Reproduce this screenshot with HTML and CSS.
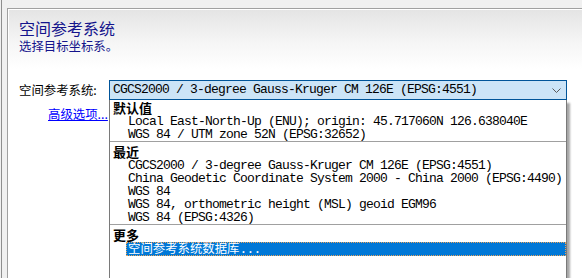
FILE: index.html
```html
<!DOCTYPE html>
<html lang="zh-CN">
<head>
    <meta charset="UTF-8">
    <title>空间参考系统</title>
    <link rel="stylesheet" href="styles.css">
</head>
<body>
    <div class="frame">
        <div class="panel">
            <h1 class="title">空间参考系统</h1>
            <p class="subtitle">选择目标坐标系。</p>

            <div class="field">
                <label class="field-label">空间参考系统:</label>
                <div class="combo">
                    <div class="combo-box">
                        <span class="combo-text">CGCS2000 / 3-degree Gauss-Kruger CM 126E (EPSG:4551)</span>
                        <svg class="chevron" width="9" height="5" viewBox="0 0 9 5">
                            <polyline points="0.5,0.5 4.5,4.5 8.5,0.5" fill="none" stroke="#5a5a5a" stroke-width="1"/>
                        </svg>
                    </div>

                    <div class="dropdown">
                        <div class="group">
                            <div class="group-title">默认值</div>
                            <div class="item">Local East-North-Up (ENU); origin: 45.717060N 126.638040E</div>
                            <div class="item">WGS 84 / UTM zone 52N (EPSG:32652)</div>
                        </div>
                        <div class="group">
                            <div class="group-title">最近</div>
                            <div class="item">CGCS2000 / 3-degree Gauss-Kruger CM 126E (EPSG:4551)</div>
                            <div class="item">China Geodetic Coordinate System 2000 - China 2000 (EPSG:4490)</div>
                            <div class="item">WGS 84</div>
                            <div class="item">WGS 84, orthometric height (MSL) geoid EGM96</div>
                            <div class="item">WGS 84 (EPSG:4326)</div>
                        </div>
                        <div class="group last">
                            <div class="group-title">更多</div>
                            <div class="item selected"><span class="cjk">空间参考系统数据库</span>...</div>
                        </div>
                    </div>
                </div>
            </div>

            <a class="advanced" href="#">高级选项...</a>
        </div>
    </div>
</body>
</html>
```

FILE: styles.css
```css
body {
    margin: 0;
    height: 278px;
    overflow: hidden;
    background-color: #f0f0f0;
    font-family: "Noto Sans CJK SC", "Liberation Sans", sans-serif;
}

.frame {
    height: 278px;
    box-sizing: border-box;
    margin-left: 1px;
    border-left: 1px solid #8e8e8e;
    padding: 8px 0 0 5px;
}

.panel {
    height: 100%;
    box-sizing: border-box;
    border-left: 1px solid #a0a0a0;
    border-top: 1px solid #a0a0a0;
    box-shadow: inset 1px 1px 0 #ffffff;
    background: linear-gradient(to bottom, #e4e4e4 0, #f6f6f6 35px, #ffffff 60px);
    padding: 9px 0 0 11px;
}

.title {
    margin: 0;
    font-size: 16px;
    font-weight: normal;
    line-height: 20px;
    color: #14148c;
}

.subtitle {
    margin: 0;
    font-size: 12.4px;
    line-height: 17px;
    color: #14148c;
}

.field {
    display: flex;
    align-items: center;
    margin-top: 25px;
}

.field-label {
    width: 90px;
    font-size: 12.4px;
    line-height: 20px;
    color: #000;
}

.combo {
    position: relative;
    width: 458px;
}

.combo-box {
    display: flex;
    align-items: center;
    justify-content: space-between;
    height: 20px;
    box-sizing: border-box;
    border: 1px solid #005499;
    background-color: #cce4f7;
    padding: 0 5px 0 3px;
}

.combo-text,
.item {
    font-family: "Liberation Mono", monospace;
    font-size: 13px;
    letter-spacing: -0.8px;
    color: #000;
    white-space: nowrap;
}

.combo-text {
    line-height: 18px;
}

.chevron {
    display: block;
}

/* popup list, lies over the link below */
.dropdown {
    position: absolute;
    top: 100%;
    left: 0;
    right: 0;
    height: 178px;
    overflow: hidden;
    box-sizing: border-box;
    background-color: #fff;
    border-left: 1px solid #7a7a7a;
    border-right: 1px solid #7a7a7a;
    box-shadow: 3px 3px 2px rgba(0, 0, 0, 0.35);
}

.group {
    border-bottom: 1px solid #a0a0a0;
}

.group.last {
    border-bottom: none;
}

.group + .group {
    padding-top: 2px;
}

.group-title {
    padding-left: 3px;
    font-size: 13px;
    font-weight: bold;
    line-height: 15px;
    color: #000;
}

.item {
    margin-left: 16px;
    padding-left: 2px;
    line-height: 13px;
}

.item.selected {
    background-color: #0078d7;
    color: #fff;
    outline: 1px dotted #e9a35a;
    outline-offset: -1px;
}

.cjk {
    font-family: "Noto Sans CJK SC", sans-serif;
    font-size: 12.4px;
    letter-spacing: 0;
}

.advanced {
    display: inline-block;
    margin: 4px 0 0 29px;
    font-size: 12.4px;
    line-height: 16px;
    color: #0000ff;
}
```
